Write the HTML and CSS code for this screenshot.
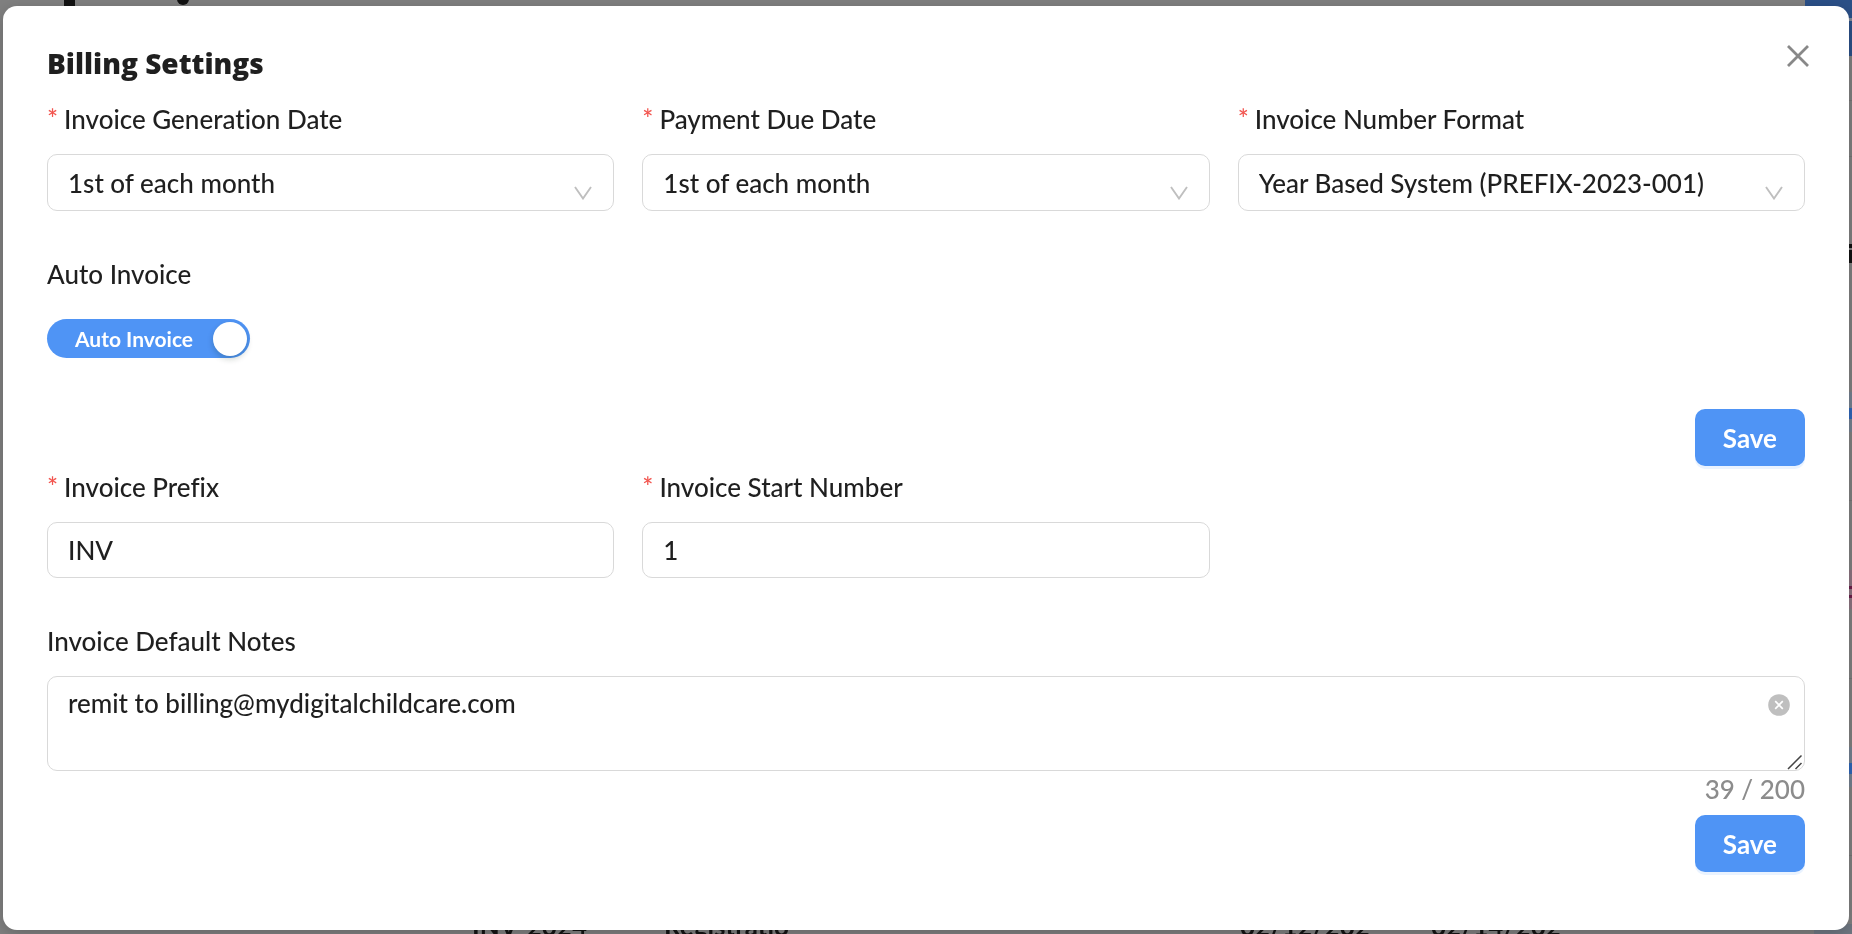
FILE: index.html
```html
<!DOCTYPE html>
<html lang="en">
<head>
<meta charset="utf-8">
<title>Billing Settings</title>
<link rel="stylesheet" href="styles.css">
</head>
<body>
<div class="backdrop" aria-hidden="true">
  <span class="heading-stem"></span>
  <span class="heading-tail"></span>
  <span class="head-button"></span>
  <span class="head-line"></span>
  <span class="rule r1"></span>
  <span class="rule r2"></span>
  <span class="rule r3"></span>
  <span class="rule r4"></span>
  <span class="rule r5"></span>
  <span class="mark mark-dark thin"></span>
  <span class="mark mark-dark"></span>
  <span class="mark mark-blue first"></span>
  <span class="mark mark-pink"></span>
  <span class="mark mark-blue second"></span>
  <span class="corner"></span>
  <span class="cell c1">INV-2024</span>
  <span class="cell c2">Registratio</span>
  <span class="cell c3">02/12/202</span>
  <span class="cell c4">02/14/202</span>
</div>
<main class="modal" role="dialog" aria-labelledby="title">
  <header class="modal-head">
    <h1 id="title">Billing Settings</h1>
    <button class="close" type="button" aria-label="Close">
      <svg viewBox="0 0 24 24" width="24" height="24"><path d="M2 2L22 22M22 2L2 22" fill="none" stroke="currentColor" stroke-width="2.8"/></svg>
    </button>
  </header>
  <form class="form">
    <div class="row">
      <div class="field">
        <label for="gen"><span class="req">*</span>Invoice Generation Date</label>
        <div class="select-wrap">
          <select id="gen" class="control"><option>1st of each month</option></select>
          <svg class="chevron" viewBox="0 0 18 14" width="18" height="14"><path d="M1 1L9 12.500L17 1" fill="none" stroke="currentColor" stroke-width="1.9"/></svg>
        </div>
      </div>
      <div class="field">
        <label for="due"><span class="req">*</span>Payment Due Date</label>
        <div class="select-wrap">
          <select id="due" class="control"><option>1st of each month</option></select>
          <svg class="chevron" viewBox="0 0 18 14" width="18" height="14"><path d="M1 1L9 12.500L17 1" fill="none" stroke="currentColor" stroke-width="1.9"/></svg>
        </div>
      </div>
      <div class="field">
        <label for="fmt"><span class="req">*</span>Invoice Number Format</label>
        <div class="select-wrap">
          <select id="fmt" class="control"><option>Year Based System (PREFIX-2023-001)</option></select>
          <svg class="chevron" viewBox="0 0 18 14" width="18" height="14"><path d="M1 1L9 12.500L17 1" fill="none" stroke="currentColor" stroke-width="1.9"/></svg>
        </div>
      </div>
    </div>
    <div class="field auto">
      <label for="auto">Auto Invoice</label>
      <button id="auto" class="switch" type="button" role="switch" aria-checked="true"><span>Auto Invoice</span><i class="knob"></i></button>
    </div>
    <div class="actions"><button class="save" type="button">Save</button></div>
  </form>
  <form class="form">
    <div class="row">
      <div class="field">
        <label for="prefix"><span class="req">*</span>Invoice Prefix</label>
        <input id="prefix" class="control text" type="text" value="INV">
      </div>
      <div class="field">
        <label for="start"><span class="req">*</span>Invoice Start Number</label>
        <input id="start" class="control text" type="text" value="1">
      </div>
    </div>
    <div class="field notes">
      <label for="notes">Invoice Default Notes</label>
      <div class="notes-wrap">
        <textarea id="notes" class="control area" maxlength="200">remit to billing@mydigitalchildcare.com</textarea>
        <button class="clear" type="button" aria-label="Clear">
          <svg viewBox="0 0 22 22" width="22" height="22"><circle cx="11" cy="11" r="10.800" fill="#bfbfbf"/><path d="M7.200 7.200L14.800 14.800M14.800 7.200L7.200 14.800" stroke="#fff" stroke-width="1.7"/></svg>
        </button>
        <svg class="grip" viewBox="0 0 16 16" width="16" height="16"><path d="M1 15L14.500 1.500M8.500 15L14.500 9" stroke="#444" stroke-width="1.500"/></svg>
      </div>
      <div class="count">39 / 200</div>
    </div>
    <div class="actions"><button class="save" type="button">Save</button></div>
  </form>
</main>
</body>
</html>
```
FILE: styles.css
```css
* { box-sizing: border-box; }
body {
  margin: 0;
  min-height: 100vh;
  padding: 6px 3px 4px;
  display: flex;
  background: #808080;
  color: #1f1f1f;
  font: 500 26px/36px "Lato Medium", Lato, "Open Sans", sans-serif;
  font-variant-ligatures: none;
  overflow: hidden;
}
button, input, select, textarea { font: inherit; font-variant-ligatures: none; color: inherit; }
button { border: 0; padding: 0; cursor: pointer; }
svg { display: block; }

.backdrop { position: fixed; inset: 0; overflow: hidden; color: #141414; }
.backdrop span { position: absolute; }
.heading-stem { left: 64px; top: 0; width: 11px; height: 6px; background: #111; }
.heading-tail { left: 177px; top: -7px; width: 12px; height: 12px; border-radius: 50%; background: #111; }
.head-button { right: 0; top: 0; width: 47px; height: 56px; background: #2b5088; }
.head-line { right: 0; top: 18px; width: 6px; height: 3px; background: #808a98; }
.rule { right: 0; width: 6px; height: 1px; background: #747474; }
.r1 { top: 100px; }
.r2 { top: 156px; }
.r3 { top: 500px; }
.r4 { top: 678px; }
.r5 { top: 855px; }
.mark { right: 0; width: 6px; }
.mark-dark { top: 250px; height: 13px; background: #111; }
.thin { top: 244px; height: 4px; }
.mark-blue { height: 40px; background: linear-gradient(#748190 16px, #2f66b8 16px, #2f66b8 27px, #748190 27px); }
.first { top: 392px; }
.second { top: 747px; }
.mark-pink { top: 570px; height: 39px; background: linear-gradient(#8c7480 16px, #6b1f4a 16px, #6b1f4a 19px, #8c7480 19px, #8c7480 25px, #6b1f4a 25px, #6b1f4a 28px, #8c7480 28px); }
.corner { right: 0; bottom: 0; width: 38px; height: 10px; background: #6f7782; }
.backdrop .cell { top: 908px; font-family: Lato, sans-serif; font-weight: 700; }
.c1 { left: 472px; }
.c2 { left: 664px; }
.c3 { left: 1240px; }
.c4 { left: 1431px; }

.modal {
  position: relative;
  flex: 1;
  padding: 38px 44px 56px;
  background: #fff;
  border-radius: 14px;
  box-shadow: 0 4px 16px rgba(0, 0, 0, .2);
}
.modal-head { display: flex; justify-content: space-between; align-items: flex-start; height: 57px; }
h1 { margin: 0; font: 800 28px/38px "Open Sans", sans-serif; }
.close { margin-right: -5px; background: none; color: #888; }

.row { display: grid; grid-template-columns: repeat(3, 1fr); gap: 28px; }
label { display: block; height: 36px; margin-bottom: 17px; }
.req { margin-right: 6px; color: #f2554f; }
.control {
  display: block;
  width: 100%;
  height: 57px;
  padding: 0 20px;
  border: 1px solid #d9d9d9;
  border-radius: 10px;
  background: #fff;
  outline: 0;
  appearance: none;
}
.text { height: 56px; }
.select-wrap, .notes-wrap { position: relative; }
.chevron { position: absolute; right: 22px; bottom: 11px; color: #bfbfbf; pointer-events: none; }
.auto { padding-top: 45px; }
.auto label { margin-bottom: 27px; }
.switch {
  display: flex;
  align-items: center;
  justify-content: space-between;
  width: 203px;
  height: 39px;
  padding: 0 3px 0 28px;
  border-radius: 20px;
  background: #4f94f5;
  color: #fff;
  font-family: Lato, sans-serif;
  font-size: 21px;
  font-weight: 700;
}
.knob { flex: none; width: 34px; height: 34px; border-radius: 50%; background: #fff; box-shadow: 0 3px 6px rgba(0, 35, 11, .2); }
.actions { display: flex; justify-content: flex-end; }
.auto + .actions { padding-top: 51px; padding-bottom: 3px; }
.save {
  height: 57px;
  padding: 0 28px;
  border-radius: 10px;
  background: #4f94f5;
  box-shadow: 0 3px 0 #eaf3ff;
  color: #fff;
  font-family: Lato, sans-serif;
  font-weight: 700;
}
.notes { padding-top: 45px; }
.area { height: 95px; padding: 8px 54px 8px 20px; resize: none; }
.clear { position: absolute; top: 18px; right: 15px; background: none; }
.grip { position: absolute; right: 2px; bottom: 1px; }
.count { text-align: right; color: #8c8c8c; height: 44px; }
```
